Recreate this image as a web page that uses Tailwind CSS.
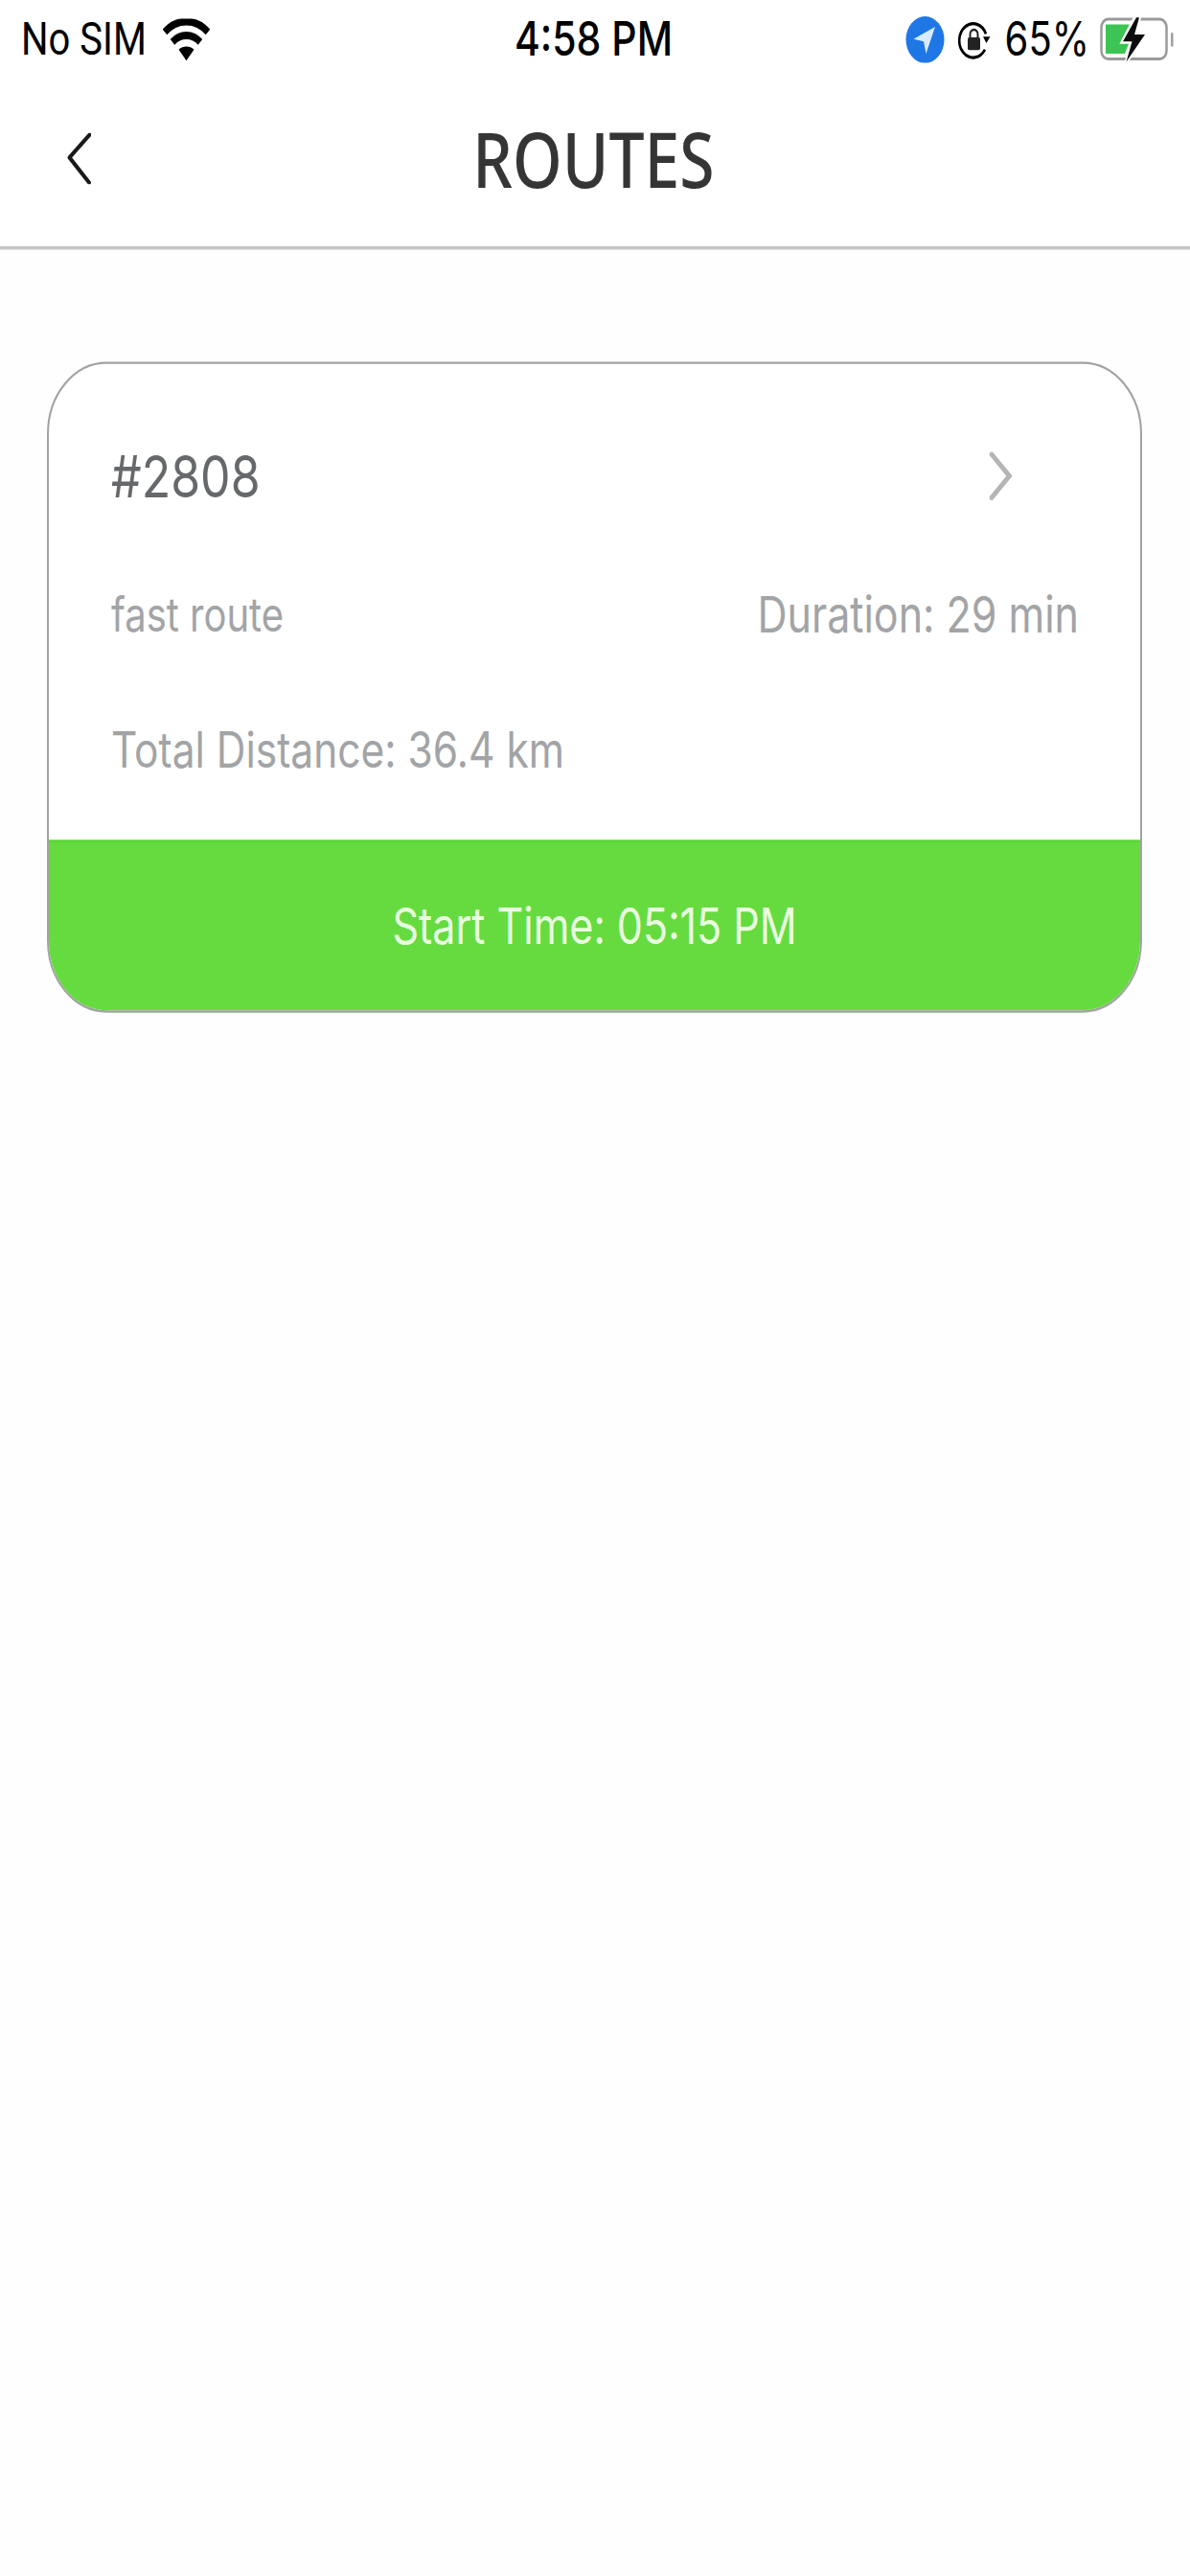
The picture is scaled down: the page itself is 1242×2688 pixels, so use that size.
<!DOCTYPE html>
<html>
<head>
<meta charset="utf-8">
<script src="https://cdn.jsdelivr.net/npm/@tailwindcss/browser@4"></script>
</head>
<body class="m-0 bg-[#fefefe] overflow-hidden">
<div class="w-[1242px] h-[2688px] overflow-hidden font-['Inter',sans-serif]">
<div class="w-[1242px] h-[2208px] origin-top scale-y-[1.2174]">

  <div class="h-[68px] pl-[22px] pr-[22px] grid grid-cols-[1fr_auto_1fr] items-center text-black text-[40px] bg-white">
    <div class="flex items-center gap-[17px]">
      <span class="font-['Roboto',sans-serif]">No SIM</span>
      <svg width="49" height="36" viewBox="0 0 49 36" fill="none">
        <path d="M2 11.5C14.5 -0.5 34.5 -0.5 47 11.5" stroke="#000" stroke-width="6.5"/>
        <path d="M10 20C18 12.5 31 12.5 39 20" stroke="#000" stroke-width="6.5"/>
        <path d="M16.5 26.5C21 23 28 23 32.5 26.5L24.5 36Z" fill="#000"/>
      </svg>
    </div>
    <div class="mr-[3px] text-[41px] font-medium">4:58 PM</div>
    <div class="flex items-center justify-end gap-[15px]">
      <svg width="41" height="40" viewBox="0 0 41 40">
        <circle cx="20.5" cy="20" r="20" fill="#1f77e6"/>
        <path d="M31 9L8.5 19.5L19 21.5L21.5 32Z" fill="#d9ecff"/>
      </svg>
      <svg width="34" height="33" viewBox="0 0 34 33" fill="none" class="ml-[-1px]">
        <path d="M28 24.5A14.5 14.5 0 1 1 29 11" stroke="#000" stroke-width="2.6"/>
        <path d="M26 13.5H33.5L29.5 19Z" fill="#000"/>
        <rect x="10" y="14" width="13" height="11" rx="1.5" fill="#222"/>
        <path d="M12.5 14V11.5a4 4 0 0 1 8 0V14" stroke="#222" stroke-width="2"/>
      </svg>
      <span>65%</span>
      <svg width="78" height="40" viewBox="0 0 78 40" fill="none" class="ml-[-4px] mr-[-6px]">
        <rect x="1.5" y="2.5" width="68" height="34" rx="7" stroke="#9a9a9a" stroke-width="2.5"/>
        <path d="M6 7H38L26 32H6Z" fill="#3cc454"/>
        <path d="M37 0L23 22H33L27 40L48 15H36L42 0Z" fill="#fff" stroke="#fff" stroke-width="3"/>
        <path d="M38 1L24 21.5H33.5L27.5 39L47 15.5H36L41 1Z" fill="#0c0c0c"/>
        <rect x="74" y="14" width="2.5" height="12" rx="1.2" fill="#9f9f9f"/>
      </svg>
    </div>
  </div>

  <header class="h-[146px] pb-[10px] px-[70px] grid grid-cols-[1fr_auto_1fr] items-center bg-white border-b-[3px] border-[#c6c6c6]">
    <svg width="25" height="44" viewBox="0 0 25 44" fill="none" class="mt-[2px]">
      <path d="M23.5 1.5L2.5 21L23 42.5" stroke="#1a1a1a" stroke-width="3.8" stroke-linecap="round" stroke-linejoin="round"/>
    </svg>
    <h1 class="font-['Noto_Sans',sans-serif] text-[66px] leading-none font-medium text-[#353535] mr-[3px]">ROUTES</h1>
  </header>

  <main class="pl-[49px] pt-[96px]">
    <article class="w-[1143px] h-[558px] rounded-[62px] border-[2px] border-[#a2a2a2] bg-white overflow-hidden flex flex-col">
      <div class="h-[408px] pt-[37px] pl-[65px] pr-[64px] flex flex-col">
        <div class="h-[118px] flex items-center justify-between">
          <span class="text-[50px] text-[#66696b]">#2808</span>
          <svg width="24" height="42" viewBox="0 0 24 42" fill="none" class="mr-[70px]">
            <path d="M3 2.5L21.5 21L3 39.5" stroke="#b4b5b6" stroke-width="4.5" stroke-linecap="round"/>
          </svg>
        </div>
        <div class="h-[118px] flex items-center justify-between">
          <span class="text-[40px] text-[#a2a4a6] mt-[1px]">fast route</span>
          <span class="text-[43px] text-[#a2a4a6]">Duration: 29 min</span>
        </div>
        <div class="h-[116px] flex items-center">
          <span class="text-[42.5px] text-[#a2a4a6]">Total Distance: 36.4 km</span>
        </div>
      </div>
      <div class="flex-1 bg-[#65db3f] border-t-[2px] border-[#56d834] flex items-center justify-center text-[43px] text-[#e9fde0]">
        <span class="mb-[2px]">Start Time: 05:15 PM</span>
      </div>
    </article>
  </main>
</div>
</div>
</body>
</html>
